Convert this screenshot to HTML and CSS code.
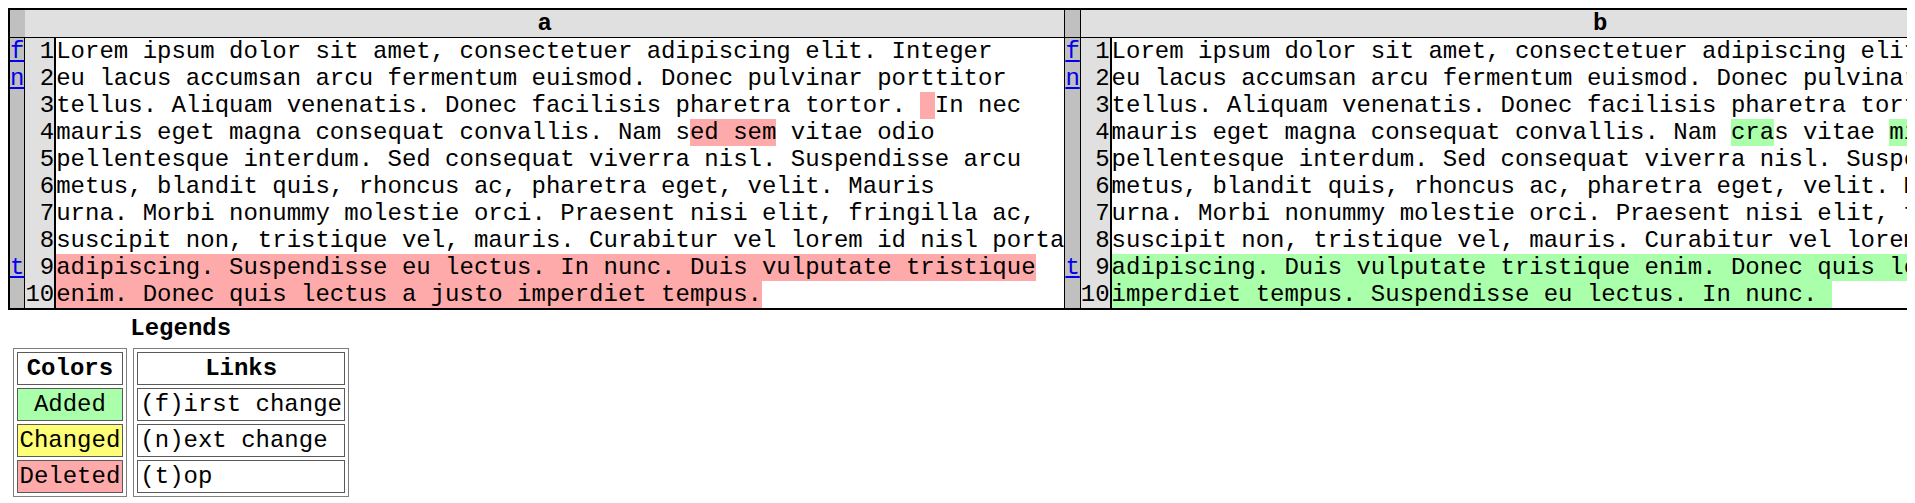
FILE: index.html
```html
<!DOCTYPE html>
<html>
<head>
<meta charset="utf-8">
<title>diff</title>
<link rel="stylesheet" href="styles.css">
</head>
<body>
<table class="diff">
<thead>
<tr><th class="diff_next"><br></th><th colspan="2" class="diff_header hd-a">a</th><th class="diff_next sep"><br></th><th colspan="2" class="diff_header sep">b</th></tr>
</thead>
<tbody>
<tr><td class="diff_next"><a href="#c0">f</a></td><td class="diff_header sep">1</td><td class="txt">Lorem ipsum dolor sit amet, consectetuer adipiscing elit. Integer</td><td class="diff_next sep"><a href="#c0">f</a></td><td class="diff_header sep">1</td><td class="txt">Lorem ipsum dolor sit amet, consectetuer adipiscing elit. Integer</td></tr>
<tr><td class="diff_next"><a href="#c0">n</a></td><td class="diff_header sep">2</td><td class="txt">eu lacus accumsan arcu fermentum euismod. Donec pulvinar porttitor</td><td class="diff_next sep"><a href="#c0">n</a></td><td class="diff_header sep">2</td><td class="txt">eu lacus accumsan arcu fermentum euismod. Donec pulvinar porttitor</td></tr>
<tr><td class="diff_next"></td><td class="diff_header sep">3</td><td class="txt">tellus. Aliquam venenatis. Donec facilisis pharetra tortor. <span class="diff_sub"> </span>In nec</td><td class="diff_next sep"></td><td class="diff_header sep">3</td><td class="txt">tellus. Aliquam venenatis. Donec facilisis pharetra tortor. In nec</td></tr>
<tr><td class="diff_next"></td><td class="diff_header sep">4</td><td class="txt">mauris eget magna consequat convallis. Nam s<span class="diff_sub">ed sem</span> vitae odio</td><td class="diff_next sep"></td><td class="diff_header sep">4</td><td class="txt">mauris eget magna consequat convallis. Nam <span class="diff_add">cra</span>s vitae <span class="diff_add">mi </span>odio</td></tr>
<tr><td class="diff_next"></td><td class="diff_header sep">5</td><td class="txt">pellentesque interdum. Sed consequat viverra nisl. Suspendisse arcu</td><td class="diff_next sep"></td><td class="diff_header sep">5</td><td class="txt">pellentesque interdum. Sed consequat viverra nisl. Suspendisse arcu</td></tr>
<tr><td class="diff_next"></td><td class="diff_header sep">6</td><td class="txt">metus, blandit quis, rhoncus ac, pharetra eget, velit. Mauris</td><td class="diff_next sep"></td><td class="diff_header sep">6</td><td class="txt">metus, blandit quis, rhoncus ac, pharetra eget, velit. Mauris</td></tr>
<tr><td class="diff_next"></td><td class="diff_header sep">7</td><td class="txt">urna. Morbi nonummy molestie orci. Praesent nisi elit, fringilla ac,</td><td class="diff_next sep"></td><td class="diff_header sep">7</td><td class="txt">urna. Morbi nonummy molestie orci. Praesent nisi elit, fringilla ac,</td></tr>
<tr><td class="diff_next"></td><td class="diff_header sep">8</td><td class="txt">suscipit non, tristique vel, mauris. Curabitur vel lorem id nisl porta</td><td class="diff_next sep"></td><td class="diff_header sep">8</td><td class="txt">suscipit non, tristique vel, mauris. Curabitur vel lorem id nisl porta</td></tr>
<tr><td class="diff_next"><a href="#top">t</a></td><td class="diff_header sep">9</td><td class="txt"><span class="diff_sub">adipiscing. Suspendisse eu lectus. In nunc. Duis vulputate tristique</span></td><td class="diff_next sep"><a href="#top">t</a></td><td class="diff_header sep">9</td><td class="txt"><span class="diff_add">adipiscing. Duis vulputate tristique enim. Donec quis lectus a justo</span></td></tr>
<tr><td class="diff_next"></td><td class="diff_header sep">10</td><td class="txt"><span class="diff_sub">enim. Donec quis lectus a justo imperdiet tempus.</span></td><td class="diff_next sep"></td><td class="diff_header sep">10</td><td class="txt"><span class="diff_add">imperdiet tempus. Suspendisse eu lectus. In nunc. </span></td></tr>
</tbody>
</table>
<table class="legend">
<tr><th colspan="2">Legends</th></tr>
<tr>
<td class="legend-cell"><table class="legbox">
<tr><th>Colors</th></tr>
<tr><td class="diff_add">&nbsp;Added&nbsp;</td></tr>
<tr><td class="diff_chg">Changed</td></tr>
<tr><td class="diff_sub">Deleted</td></tr>
</table></td>
<td class="legend-cell"><table class="legbox">
<tr><th>Links</th></tr>
<tr><td>(f)irst change</td></tr>
<tr><td>(n)ext change</td></tr>
<tr><td>(t)op</td></tr>
</table></td>
</tr>
</table>
</body>
</html>
```
FILE: styles.css
```css
html {
  overflow: hidden;
}
body {
  margin: 8px;
  font-family: "Liberation Mono", "Courier New", monospace;
  font-size: 24px;
  color: #000;
  background: #fff;
}
table.diff {
  border-collapse: collapse;
  border: 2px solid #000;
}
table.diff th,
table.diff td {
  padding: 0;
  white-space: pre;
  line-height: normal;
}
table.diff thead tr {
  border-bottom: 1px solid #000;
}
.diff_next {
  background-color: #c0c0c0;
}
.diff_header {
  background-color: #e0e0e0;
}
td.diff_header {
  text-align: right;
}
th.diff_header {
  font-weight: bold;
  text-align: center;
}
.sep {
  border-left: 1px solid #000;
}
td.txt {
  border-left: 2px solid #000;
}
.diff_add {
  background-color: #aaffaa;
}
.diff_chg {
  background-color: #ffff77;
}
.diff_sub {
  background-color: #ffaaaa;
}
a {
  color: #0000ee;
}
table.legend {
  border-spacing: 3px;
}
table.legend > tbody > tr > th {
  padding: 1.5px;
  font-weight: bold;
  text-align: center;
}
td.legend-cell {
  padding: 1.5px;
}
table.legbox {
  border: 1px solid #808080;
  border-spacing: 3px;
}
table.legbox th,
table.legbox td {
  border: 1px solid #5a5a5a;
  padding: 2px;
  white-space: pre;
}
table.legbox th {
  font-weight: bold;
  text-align: center;
}
```
